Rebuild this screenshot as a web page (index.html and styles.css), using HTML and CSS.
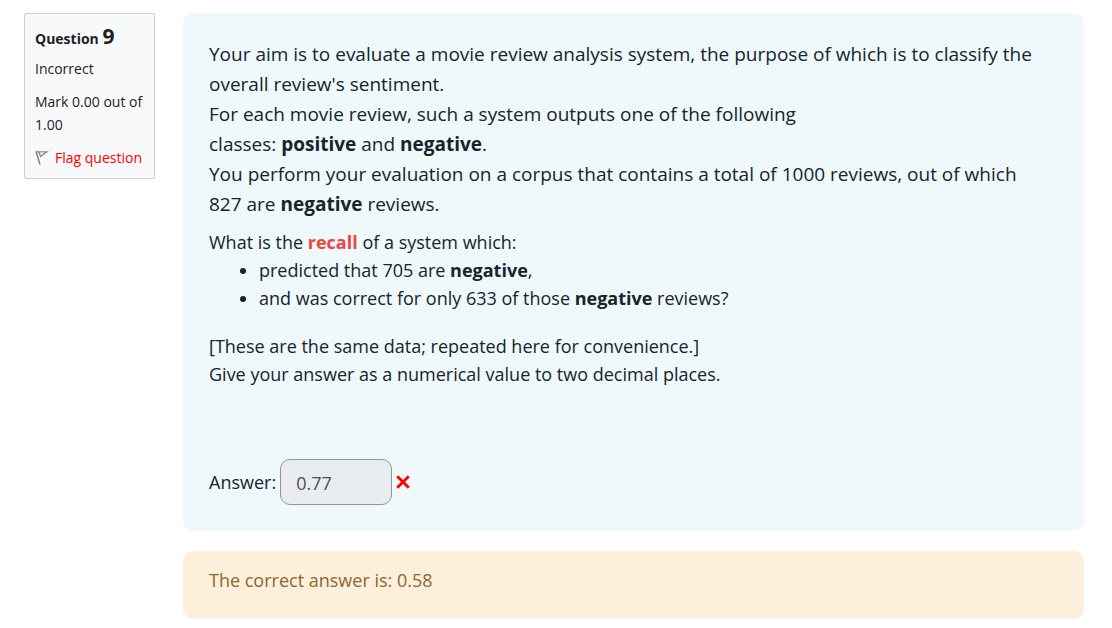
FILE: index.html
```html
<!DOCTYPE html>
<html lang="en">
<head>
  <meta charset="UTF-8">
  <title>Question 9</title>
  <link rel="stylesheet" href="styles.css">
</head>
<body>
  <div class="question">
    <div class="info">
      <h3 class="number">Question <span class="qno">9</span></h3>
      <div class="state">Incorrect</div>
      <div class="grade">Mark 0.00 out of 1.00</div>
      <a class="flag" href="#">
        <svg class="flag-icon" width="14" height="16" viewBox="0 0 14 16" fill="none" stroke="#888">
          <path d="M1 1.5 L5 14.5" stroke-width="1.6"/>
          <path d="M1 1.8 H12 L5.5 6.5 L4 2" stroke-width="1.3"/>
        </svg>
        <span>Flag question</span>
      </a>
    </div>

    <div class="content">
      <div class="formulation">
        <p class="intro">
          Your aim is to evaluate a movie review analysis system, the purpose of which is to classify the<br>
          overall review's sentiment.<br>
          For each movie review, such a system outputs one of the following<br>
          classes: <strong>positive</strong> and <strong>negative</strong>.<br>
          You perform your evaluation on a corpus that contains a total of 1000 reviews, out of which<br>
          827 are <strong>negative</strong> reviews.
        </p>
        <p class="ask">What is the <strong class="recall">recall</strong> of a system which:</p>
        <ul>
          <li>predicted that 705 are <strong>negative</strong>,</li>
          <li>and was correct for only 633 of those <strong>negative</strong> reviews?</li>
        </ul>
        <p class="note">
          [These are the same data; repeated here for convenience.]<br>
          Give your answer as a numerical value to two decimal places.
        </p>
        <div class="answer">
          <label for="answer">Answer:</label>
          <input type="text" id="answer" value="0.77" readonly>
          <svg class="wrong" width="14" height="14" viewBox="0 0 14 14" stroke="#f00" stroke-width="2.8" role="img" aria-label="Incorrect">
            <path d="M1.2 1.2 L12.8 12.8 M12.8 1.2 L1.2 12.8"/>
          </svg>
        </div>
      </div>

      <div class="outcome">The correct answer is: 0.58</div>
    </div>
  </div>
</body>
</html>
```
FILE: styles.css
```css
* {
  box-sizing: border-box;
}

body {
  margin: 0;
  background: #fff;
  color: #1d2125;
  font-family: "Segoe UI", "Open Sans", sans-serif;
  font-size: 18px;
  line-height: 28px;
}

p, ul, h3 {
  margin: 0;
}

.question {
  display: flex;
  align-items: flex-start;
  gap: 28px;
  padding: 13px 28px 9px 24px;
}

.info {
  flex: 0 0 131px;
  padding: 9px 9px 9px 10px;
  background: #f8f9fa;
  border: 1px solid #cad0d7;
  border-radius: 2px;
  font-size: 14px;
  line-height: 23px;
}

.number {
  font-size: 14px;
  line-height: 26px;
}

.qno {
  font-size: 21px;
}

.state {
  margin-top: 5px;
}

.grade, .flag {
  margin-top: 10px;
}

.flag {
  display: flex;
  align-items: center;
  gap: 6px;
  color: #f00;
  text-decoration: none;
  white-space: nowrap;
}

.flag-icon {
  flex: none;
}

.content {
  flex: 1;
}

.formulation {
  padding: 26px;
  background: #eff8fb;
  border-radius: 10px;
  color: #14252b;
}

.intro {
  font-size: 19px;
  line-height: 30px;
  margin-bottom: 9px;
}

.recall {
  color: #ef4540;
}

ul {
  padding-left: 50px;
  margin-bottom: 20px;
}

.answer {
  display: flex;
  align-items: center;
  gap: 4px;
  margin-top: 71px;
}

.answer input {
  width: 112px;
  height: 46px;
  padding: 2px 15px 0;
  background: #e9ecef;
  border: 1px solid #8f959e;
  border-radius: 10px;
  color: #495057;
  font: inherit;
}

.outcome {
  margin-top: 20px;
  padding: 15px 26px 25px;
  background: #fcefdc;
  border-radius: 10px;
  color: #8e662e;
}
```
